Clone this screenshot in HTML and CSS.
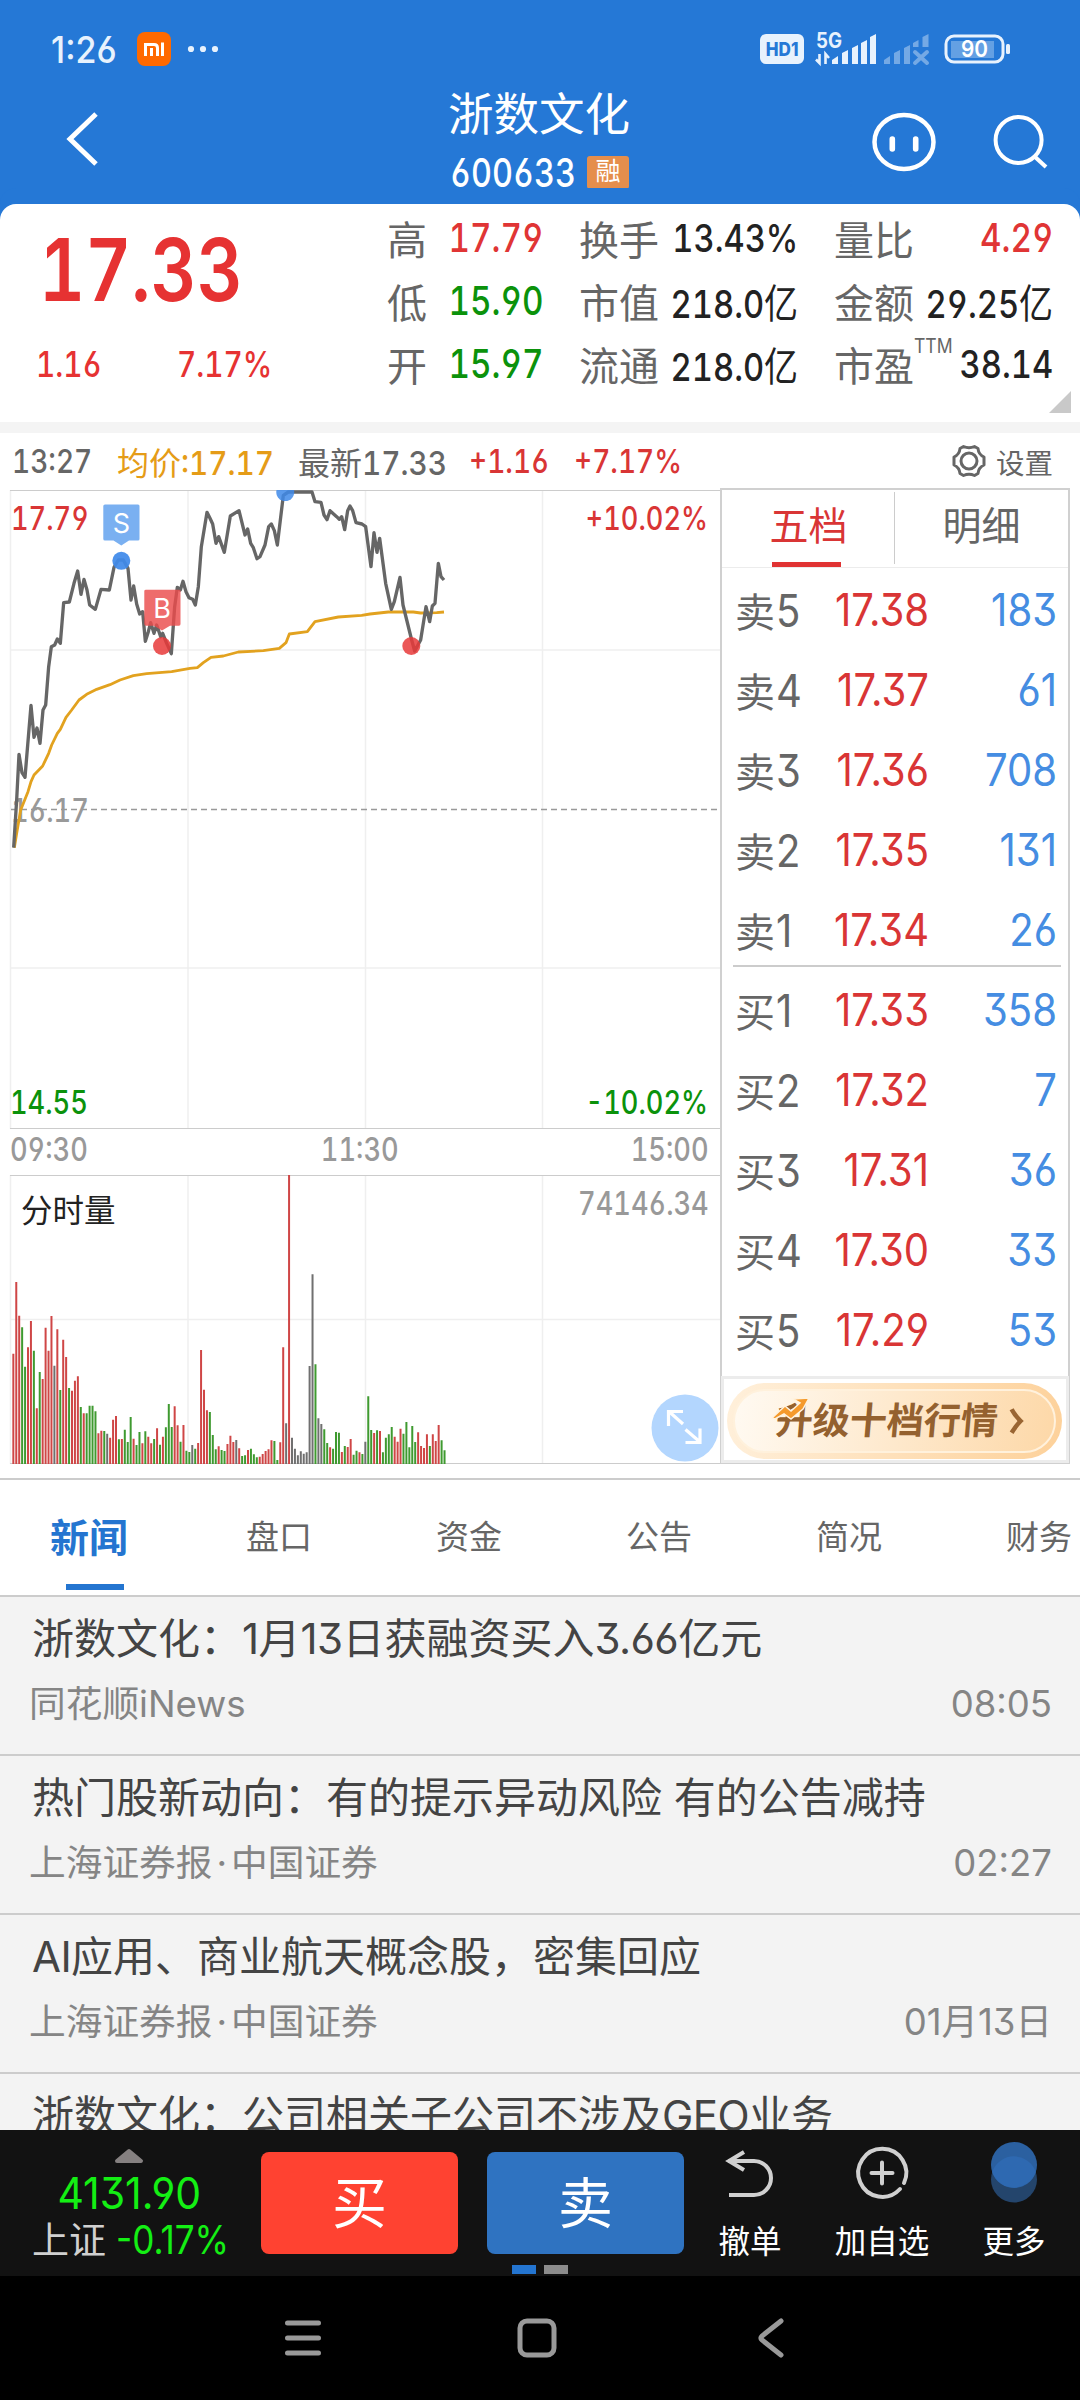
FILE: index.html
```html
<!DOCTYPE html>
<html lang="zh-CN">
<head>
<meta charset="utf-8">
<title>浙数文化 600633</title>
<link rel="stylesheet" href="styles.css">
</head>
<body>
<div class="screen">
  <header class="header">
    <div class="status">
      <span class="clock">1:26</span>
      <svg class="mi" width="34" height="34" viewBox="0 0 34 34"><rect width="34" height="34" rx="8" fill="#ff6900"/><path d="M8.500 24V12.500H17Q20.500 12.500 20.500 16V24M14.500 16V24M25.500 10.500V24" fill="none" stroke="#fff" stroke-width="3"/></svg>
      <svg class="dots" width="32" height="8" viewBox="0 0 32 8"><g fill="#e8f2fd"><circle cx="4" cy="4" r="3.100"/><circle cx="16" cy="4" r="3.100"/><circle cx="28" cy="4" r="3.100"/></g></svg>
      <span class="hd"><span>HD1</span></span>
      <svg class="signal" width="114" height="34" viewBox="0 0 114 34">
        <text class="net" x="1" y="16" textLength="26" lengthAdjust="spacingAndGlyphs">5G</text>
        <path d="M4.500 22V31L1 27.500M10.500 32V22L14 26" fill="none" stroke="#e8f2fd" stroke-width="2.600"/>
        <g fill="#e8f2fd"><path d="M17 32V28L23 24V32ZM27 32V21L33 18V32ZM37 32V16L43 13V32ZM46 32V11L52 8V32ZM55 32V5L61 2V32Z"/></g>
        <g fill="#74a9e5"><path d="M69 32V28L75 24V32ZM79 32V21L85 18V32ZM89 32V16L95 13V32ZM98 15V11L103.500 8V15ZM107.500 15V5L113.500 2V15Z"/></g>
        <path d="M100 20L112 31M112 20L100 31" stroke="#74a9e5" stroke-width="4" stroke-linecap="round"/>
      </svg>
      <svg class="battery" width="68" height="30" viewBox="0 0 68 30"><rect x="2" y="2" width="57" height="26" rx="8" fill="none" stroke="#e8f2fd" stroke-width="3"/><rect x="7" y="7" width="43" height="17" fill="#64a0e3"/><rect x="62" y="10" width="4" height="10" rx="1.500" fill="#e8f2fd"/><text class="charge" x="17" y="23.300" textLength="27" lengthAdjust="spacingAndGlyphs">90</text></svg>
    </div>
    <div class="titlebar">
      <svg class="back" width="36" height="60" viewBox="0 0 36 60"><path d="M31 5L5 30L31 55" fill="none" stroke="#fff" stroke-width="5"/></svg>
      <div class="title">
        <h1>浙数文化</h1>
        <div class="code"><span class="din">600633</span><b>融</b></div>
      </div>
      <svg class="tools" width="180" height="64" viewBox="0 0 180 64"><g fill="none" stroke="#fff"><ellipse cx="34" cy="32" rx="29.500" ry="27" stroke-width="4.500"/><path d="M22.300 29V39M45.700 29V39" stroke-width="5.600" stroke-linecap="round"/><circle cx="148.600" cy="30" r="23" stroke-width="4"/><path d="M164 46L176 57" stroke-width="4"/></g></svg>
    </div>
  </header>

  <section class="quote">
    <div class="last">
      <span class="din price">17.33</span>
      <div class="change"><span class="din">1.16</span><span class="din">7.17%</span></div>
    </div>
    <dl class="stats">
      <div><dt>高</dt><dd class="din up">17.79</dd></div>
      <div><dt>换手</dt><dd class="din">13.43%</dd></div>
      <div><dt>量比</dt><dd class="din up">4.29</dd></div>
      <div><dt>低</dt><dd class="din down">15.90</dd></div>
      <div><dt>市值</dt><dd class="din">218.0<i>亿</i></dd></div>
      <div><dt>金额</dt><dd class="din">29.25<i>亿</i></dd></div>
      <div><dt>开</dt><dd class="din down">15.97</dd></div>
      <div><dt>流通</dt><dd class="din">218.0<i>亿</i></dd></div>
      <div><dt>市盈<sup>TTM</sup></dt><dd class="din">38.14</dd></div>
    </dl>
    <svg class="corner" width="22" height="22" viewBox="0 0 22 22"><path d="M22 0V22H0Z" fill="#c9c9c9"/></svg>
  </section>

  <section class="info">
    <span class="din t-time">13:27</span>
    <span class="t-avg">均价<span class="din">:17.17</span></span>
    <span class="t-last">最新<span class="din">17.33</span></span>
    <span class="din t-chg">+1.16</span>
    <span class="din t-pct">+7.17%</span>
    <span class="setup"><svg width="36" height="36" viewBox="0 0 36 36"><g fill="none" stroke="#666" stroke-width="3"><path d="M12.500 3.500Q18 6 23.500 3.500L27 5.500Q27.500 11.500 33 14V22Q27.500 24.500 27 30.500L23.500 32.500Q18 30 12.500 32.500L9 30.500Q8.500 24.500 3 22V14Q8.500 11.500 9 5.500Z" stroke-linejoin="round"/><circle cx="18" cy="18" r="8"/></g></svg>设置</span>
  </section>

  <section class="board">
    <div class="charts">
      <div class="plot">
        <svg width="710" height="639" viewBox="0 0 710 639">
          <g stroke="#efefef" stroke-width="1.500"><path d="M.5 0V639M178 0V639M355.500 0V639M532.500 0V639M0 160H710M0 478H710"/></g>
          <path d="M0 .5H710M0 638.500H710" stroke="#ccc"/>
          <path d="M1 319.500H710" stroke="#999" stroke-width="1.700" stroke-dasharray="6 4"/>
        </svg>
        <span class="din lab hi">17.79</span><span class="din lab hi-pct">+10.02%</span>
        <span class="din lab mid">16.17</span>
        <span class="din lab lo">14.55</span><span class="din lab lo-pct">-10.02%</span>
        <svg class="lines" width="710" height="639" viewBox="0 0 710 639">
          <g transform="translate(-10 -10) scale(.33333)" fill="none" stroke-linejoin="round">
            <path stroke="#e2a21f" stroke-width="8.500" d="M43 1103L50 1060L62 990L84 935L93 905L102 885L128 858L146 820L155 795L172 760L181 748L198 712L215 690L237 660L260 643L290 628L330 614L360 600L400 587L440 581L515 575L570 565L592 563L610 548L633 532L670 528L715 516L790 512L838 505L858 488L868 462L922 455L945 425L1015 411L1085 406L1110 402L1165 396L1240 396L1262 399L1310 398L1332 396"/>
            <path stroke="#666" stroke-width="10" d="M41 1103L50 960L57 823L66 878L75 892L93 676L102 772L111 744L120 790L129 690L137 675L146 560L154 500L164 495L172 477L181 490L191 368L208 366L222 310L233 273L243 343L252 298L261 330L269 375L286 388L303 328L328 330L342 262L355 240L370 240L384 265L393 360L401 318L410 372L419 402L428 395L436 484L445 455L452 428L462 460L470 435L482 470L488 460L500 490L514 521L524 380L532 322L541 330L549 304L558 335L567 353L578 358L586 375L595 320L604 200L621 97L630 115L638 132L648 190L656 170L673 217L691 108L717 92L735 165L743 147L752 190L760 203L771 236L780 230L795 195L806 140L814 132L823 152L832 195L850 46L865 36L936 36L945 65L963 67L972 105L981 119L990 92L1010 110L1018 118L1025 110L1034 149L1043 92L1050 78L1058 92L1068 128L1086 132L1097 140L1113 260L1122 158L1131 217L1139 175L1157 310L1174 388L1183 365L1200 292L1209 375L1235 480L1244 513L1262 480L1278 380L1289 425L1297 378L1305 370L1315 250L1323 290L1332 300"/>
          </g>
          <circle cx="111.300" cy="70.800" r="9" fill="#3f8ae9" opacity=".93"/>
          <path d="M266.500 0A9 9 0 1 0 284 0Z" fill="#3f8ae9" opacity=".85"/>
          <g fill="#e83a3a" opacity=".85"><circle cx="152" cy="156" r="9"/><circle cx="401.300" cy="156" r="9"/></g>
          <path d="M95 14.500H128Q129.500 14.500 129.500 16V49Q129.500 50.500 128 50.500H119L111.300 55.500L103.500 50.500H95Q93.300 50.500 93.300 49V16Q93.300 14.500 95 14.500Z" fill="#6fa9f0" opacity=".92"/>
          <path d="M136 99.800H169Q170.500 99.800 170.500 101V134Q170.500 135.800 169 135.800H160L152 140.500L144 135.800H136Q134.300 135.800 134.300 134V101Q134.300 99.800 136 99.800Z" fill="#ea4c4c" opacity=".82"/>
          <text class="mark" x="111.300" y="42.500">S</text><text class="mark" x="152" y="127.500">B</text>
        </svg>
      </div>
      <div class="axis"><span class="din">09:30</span><span class="din">11:30</span><span class="din">15:00</span></div>
      <div class="volume">
        <svg id="volume" width="710" height="289" viewBox="0 0 710 289">
          <path d="M.5 0V289M178 0V289M355.500 0V289M532.500 0V289M0 144.500H710" stroke="#efefef" stroke-width="1.500"/>
          <path d="M0 .5H710M0 288.500H710" stroke="#ccc"/>
        </svg>
        <span class="lab vname">分时量</span><span class="din lab vmax">74146.34</span>
        <svg class="expand" width="68" height="68" viewBox="0 0 68 68"><circle cx="34" cy="34" r="33.500" fill="#b3d6fe"/><path d="M32 30L18 17.500M17.500 32V17.500H32M34.500 35.500L49 48M34.500 48.500H49V34.500" fill="none" stroke="#fff" stroke-width="3.200"/></svg>
      </div>
    </div>

    <div class="book">
      <div class="booktabs"><span class="on">五档</span><span>明细</span></div>
      <div class="levels">
        <div><span>卖<em>5</em></span><b>17.38</b><i>183</i></div>
        <div><span>卖<em>4</em></span><b>17.37</b><i>61</i></div>
        <div><span>卖<em>3</em></span><b>17.36</b><i>708</i></div>
        <div><span>卖<em>2</em></span><b>17.35</b><i>131</i></div>
        <div class="split"><span>卖<em>1</em></span><b>17.34</b><i>26</i></div>
        <div><span>买<em>1</em></span><b>17.33</b><i>358</i></div>
        <div><span>买<em>2</em></span><b>17.32</b><i>7</i></div>
        <div><span>买<em>3</em></span><b>17.31</b><i>36</i></div>
        <div><span>买<em>4</em></span><b>17.30</b><i>33</i></div>
        <div><span>买<em>5</em></span><b>17.29</b><i>53</i></div>
      </div>
      <div class="upgrade"><div class="pill"><div class="ring">
        <span>升级十档行情</span>
        <svg class="chev" width="18" height="30" viewBox="0 0 18 30"><path d="M3 2Q6 8 13 15Q8 20 3 28" fill="none" stroke="#9a6532" stroke-width="5"/></svg>
        <svg class="spark" width="40" height="26" viewBox="0 0 40 26"><path d="M1 21L14 9L20 14L29 6L22 2L38 1L32 12L20 22L13 17L4 22Z" fill="#f59a2c" stroke="#fff3e0" stroke-width="1.500"/></svg>
      </div></div></div>
    </div>
  </section>

  <nav class="tabs"><span class="on">新闻</span><span>盘口</span><span>资金</span><span>公告</span><span>简况</span><span>财务</span></nav>

  <section class="news">
    <article><h2>浙数文化：<em>1</em>月<em>13</em>日获融资买入<em>3.66</em>亿元</h2><p><span>同花顺<em>iNews</em></span><time>08:05</time></p></article>
    <article><h2>热门股新动向：有的提示异动风险 有的公告减持</h2><p><span>上海证券报<u>·</u>中国证券</span><time>02:27</time></p></article>
    <article><h2><em>AI</em>应用、商业航天概念股，密集回应</h2><p><span>上海证券报<u>·</u>中国证券</span><time>01月13日</time></p></article>
    <article><h2>浙数文化：公司相关子公司不涉及<em>GEO</em>业务</h2></article>
  </section>

  <footer class="trade">
    <div class="index">
      <svg width="30" height="16" viewBox="0 0 30 16"><path d="M3 13L15 3L27 13Z" fill="#858080" stroke="#858080" stroke-width="4" stroke-linejoin="round"/></svg>
      <span class="idx">4131.90</span>
      <span class="idx-chg">上证<em>-0.17%</em></span>
    </div>
    <div class="btn buy">买</div>
    <div class="btn sell">卖</div>
    <div class="act a1"><svg width="50" height="50" viewBox="0 0 50 50"><path d="M3 12H29A17 17 0 0 1 29 46H4M19 3L4 12L19 21" fill="none" stroke="#d0d0d0" stroke-width="4"/></svg>撤单</div>
    <div class="act a2"><svg width="54" height="54" viewBox="0 0 54 54"><path d="M49 37A24 24 0 1 0 45 43M27 16.500V37.500M16.500 27H37.500" fill="none" stroke="#d0d0d0" stroke-width="4" stroke-linecap="round"/></svg>加自选</div>
    <div class="act a3"><svg width="48" height="64" viewBox="0 0 48 64"><circle cx="24" cy="38.500" r="23" fill="#24456c"/><circle cx="24" cy="24" r="23" fill="#2b60a0"/><path d="M2.200 31A23 23 0 0 1 45.800 31A23 23 0 0 1 2.200 31Z" fill="#2e69b1"/></svg>更多</div>
    <div class="pager"><i></i><i></i></div>
  </footer>

  <div class="sysnav">
    <svg width="38" height="40" viewBox="0 0 38 40"><path d="M3.500 5H34.500M3.500 20H34.500M3.500 35H34.500" stroke="#999" stroke-width="5" stroke-linecap="round"/></svg>
    <svg class="home" width="40" height="40" viewBox="0 0 40 40"><rect x="3" y="3" width="34" height="34" rx="7" fill="none" stroke="#999" stroke-width="5"/></svg>
    <svg width="28" height="40" viewBox="0 0 28 40"><path d="M24 3L5 18Q3 20 5 22L24 37" fill="none" stroke="#999" stroke-width="5" stroke-linecap="round"/></svg>
  </div>
</div>
<script src="volume.js"></script>
</body>
</html>
```
FILE: styles.css
```css
* { box-sizing: border-box; }
body { margin: 0; font-family: Inter, "Noto Sans CJK SC", sans-serif; color: #666; }
h1, h2, p, dl, dd { margin: 0; font-weight: 400; }
em, i, u { font-style: normal; text-decoration: none; }
svg { display: block; flex: none; overflow: visible; }
.screen { width: 1080px; height: 2400px; overflow: hidden; background: #fff; display: flex; flex-direction: column; }
.screen > * { flex: none; }
.din { display: inline-block; white-space: nowrap; font-weight: 500; font-variant-numeric: tabular-nums; font-feature-settings: "tnum", "cv03", "cv04"; transform: scaleX(.85); transform-origin: left center; }

.header { height: 204px; background: #2578d6; color: #fff; }
.status { height: 98px; display: flex; align-items: center; padding-left: 51px; color: #e8f2fd; }
.clock { width: 86px; font-size: 37px; font-weight: 500; font-feature-settings: "cv03"; transform: scaleX(.92); transform-origin: left; }
.dots { margin-left: 16px; }
.hd { margin-left: 541px; width: 44px; height: 30px; border-radius: 6px; background: #e8f2fd; color: #2578d6; display: flex; align-items: center; justify-content: center; font-size: 19px; font-weight: 800; }
.hd span { transform: scaleX(.9); }
.signal { margin-left: 11px; }
.net { font-size: 21px; font-weight: 700; fill: #e8f2fd; }
.battery { margin-left: 15px; }
.charge { font-size: 23px; font-weight: 600; fill: #fff; }
.titlebar { height: 106px; display: flex; align-items: center; }
.back { margin: -24px 0 0 65px; }
.title { flex: 1; margin-left: 347px; height: 106px; }
.title h1 { height: 38px; font-size: 45.500px; line-height: 34px; font-weight: 400; white-space: nowrap; }
.code { display: flex; align-items: center; height: 73px; }
.code .din { width: 137px; font-size: 40px; margin-left: 2px; transform: scaleX(.81); }
.code b { width: 42px; height: 33px; border-radius: 3px; background: #e58e4c; font-size: 25px; line-height: 31px; font-weight: 400; text-align: center; }
.tools { margin: -19px 30px 0 0; }

.quote { height: 218px; display: flex; position: relative; background: #fff; border-radius: 16px 16px 0 0; box-shadow: 0 -16px 0 #2578d6; }
.last { width: 387px; padding: 22px 0 0 36px; color: #e63232; }
.price { font-size: 86px; font-weight: 600; line-height: 88px; display: block; margin-left: 3px; transform: scaleX(.83); }
.change { display: flex; margin-top: 24px; font-size: 35px; line-height: 52px; }
.change .din:first-child { width: 141px; }
.stats { display: grid; grid-template-columns: 192px 255px 219px; grid-auto-rows: 63px; margin-top: 2px; font-size: 40px; }
.stats > div { display: flex; justify-content: space-between; align-items: center; white-space: nowrap; padding-right: 36px; }
.stats > div:nth-child(3n) { padding-right: 0; }
.stats dt { display: flex; }
.stats sup { font-size: 20px; line-height: 22px; height: 40px; transform: scaleX(.88); transform-origin: left; }
.stats dd { color: #222; font-size: 38.500px; margin-left: -40px; transform-origin: right center; }
.stats dd.up, .stats dd.down { font-size: 40px; transform: scaleX(.83); }
.stats dd i { font-size: 40px; font-weight: 400; }
.stats .up { color: #e03535; }
.stats .down { color: #0b920b; }
.corner { position: absolute; right: 9px; bottom: 9px; }

.info { border-top: 11px solid #f4f4f4; height: 67px; display: flex; align-items: center; font-size: 33px; padding-left: 12px; white-space: nowrap; }
.info > span { flex: none; }
.info .t-time { width: 105px; }
.info .din { font-weight: 450; }
.t-avg { width: 181px; color: #e59c17; font-size: 32px; }
.t-last { width: 171px; font-size: 32px; }
.t-avg .din, .t-last .din { font-size: 33px; transform: scaleX(.9); }
.info .t-chg { width: 105px; color: #d93535; font-weight: 500; }
.info .t-pct { color: #d93535; width: 377px; font-weight: 500; }
.setup { display: flex; align-items: center; gap: 9px; font-size: 28.500px; }

.board { height: 989px; display: flex; padding-left: 10px; padding-top: 1px; }
.charts { width: 710px; position: relative; }
.plot, .volume { position: relative; }
.plot { height: 639px; }
.lab { position: absolute; font-size: 32px; line-height: 32px; }
.lines { position: absolute; left: 0; top: 0; }
.hi { left: 1px; top: 13px; color: #d93535; }
.hi-pct { right: 12px; top: 13px; color: #d93535; transform-origin: right; }
.mid { left: 1px; top: 305px; color: #999; }
.lo { left: 0; top: 597px; color: #0b920b; }
.lo-pct { right: 12px; top: 597px; color: #0b920b; transform-origin: right; }
.mark { font-size: 27px; fill: #fff; text-anchor: middle; }
.axis { height: 46px; display: flex; justify-content: space-between; align-items: center; padding: 0 11px 5px 0; color: #999; font-size: 32px; line-height: 32px; }
.axis .din:nth-child(2) { transform-origin: center; }
.axis .din:last-child { transform-origin: right; }
.vname { left: 11px; top: 20px; color: #222; font-size: 31.500px; }
.vmax { right: 11px; top: 13px; color: #999; transform-origin: right; }
.expand { position: absolute; left: 641px; top: 219px; }

.book { width: 350px; height: 976px; margin-top: -2px; border: 2px solid #d0d0d0; display: flex; flex-direction: column; }
.booktabs { height: 78px; display: grid; grid-template-columns: 173px 173px; border-bottom: 1.500px solid #ececec; font-size: 39px; line-height: 71px; text-align: center; }
.booktabs span { position: relative; }
.booktabs .on { color: #d93535; }
.booktabs .on::before { content: ""; position: absolute; left: 50px; bottom: 0; width: 69px; height: 5px; background: #e03333; }
.booktabs .on::after { content: ""; position: absolute; right: 0; top: 2px; width: 1px; height: 72px; background: #ccc; }
.levels { padding: 2px 7px 0 11px; }
.levels > div { height: 80px; display: grid; grid-template-columns: 80px 114px 1fr; align-items: center; font-size: 40px; padding: 0 4px 0 2px; }
.levels .split { height: 77px; padding-top: 5px; margin-bottom: 3px; border-bottom: 2px solid #ccc; }
.levels span { white-space: nowrap; }
.levels em, .levels b, .levels i { display: inline-block; font-size: 44.500px; font-weight: 400; line-height: 50px; font-feature-settings: "cv03", "cv04", "cv09"; transform: scaleX(.9); transform-origin: right; text-align: right; }
.levels em { transform-origin: left; margin-left: 1px; }
.levels b { color: #d93535; }
.levels i { color: #458de2; }
.upgrade { margin: auto -1px -1px; height: 87px; border: 3px solid #ececec; padding: 4px 3px; }
.pill { height: 76px; width: 335px; border-radius: 38px; padding: 6px; background: linear-gradient(100deg, #fff0db, #fdd19a); }
.ring { height: 64px; border-radius: 32px; border: 2px solid #fff1dc; background: linear-gradient(100deg, #fffaf2, #fdd8a8); position: relative; display: flex; align-items: center; padding-left: 41px; }
.ring span { font-size: 37px; line-height: 50px; font-weight: 600; color: #94612f; transform: skewX(-5deg); white-space: nowrap; }
.chev { margin-left: 10px; transform: scale(.9); }
.spark { position: absolute; left: 36px; top: 6px; }

.tabs { height: 119px; border-top: 2px solid #ccc; border-bottom: 2px solid #ccc; display: flex; font-size: 33px; line-height: 115px; color: #666; padding-left: 0; }
.tabs span { width: 190px; flex: none; text-align: center; position: relative; left: -6px; }
.tabs .on { font-size: 39px; font-weight: 700; color: #2475d0; }
.tabs .on::after { content: ""; position: absolute; left: 72px; bottom: 5px; width: 58px; height: 6px; background: #2475d0; }

.news { height: 533px; background: #f3f3f3; overflow: hidden; }
.news article { height: 159px; border-bottom: 2px solid #ccc; padding: 15px 28px 0 32px; white-space: nowrap; color: #444; }
.news h2 { font-size: 42px; line-height: 54px; }
.news p { display: flex; justify-content: space-between; margin: 13px 0 0 -3px; font-size: 36.700px; line-height: 50px; color: #858585; }
.news em, .news time { font-feature-settings: "cv03", "cv09"; }
.news h2 em { letter-spacing: -.6px; }
.news u { margin: 0 4px; }
.news time { font-size: 36.500px; }

.trade { height: 146px; background: #121212; position: relative; display: flex; color: #fff; }
.index { width: 258px; margin-right: 3px; display: flex; flex-direction: column; align-items: center; padding-top: 18px; white-space: nowrap; }
.idx { color: #14ef14; font-size: 44px; line-height: 50px; margin-top: 4px; font-feature-settings: "cv03", "cv04", "cv09"; transform: scaleX(.93); }
.idx-chg { font-size: 37px; line-height: 44px; width: 194px; color: #d0d0d0; }
.idx-chg em { display: inline-block; margin-left: 10px; color: #14ef14; font-size: 39px; transform: scaleX(.9); transform-origin: left; }
.btn { width: 197px; height: 102px; margin: 22px 29px 0 0; border-radius: 8px; font-size: 55px; line-height: 102px; text-align: center; }
.buy { background: #ff4231; }
.sell { background: #2f73c1; margin-right: 0; }
.act { width: 132px; display: flex; flex-direction: column; align-items: center; justify-content: space-between; padding-bottom: 14px; font-size: 31.500px; line-height: 40px; white-space: nowrap; }
.a1 { padding-top: 19px; }
.a2 { padding-top: 16px; }
.a3 { padding-top: 11px; }
.pager { position: absolute; left: 512px; bottom: 2px; display: flex; gap: 8px; }
.pager i { width: 24px; height: 9px; background: #2475d0; }
.pager i + i { background: #8c8c8c; }

.sysnav { height: 124px; background: #000; display: flex; align-items: center; padding: 0 295px 0 284px; justify-content: space-between; }
.home { margin-left: -5px; }
```
FILE: volume.js
```js
// One bar per minute: colour key, then the bar's top in thirds of a pixel (baseline 1031).
const bars = `r701 r486 r587 g622 g740 r682 r603 g692 r865 g756 r777 r623 r692 r588 k737 r628 g810 r659 r711 g804
r812 r782 r769 g861 r880 g880 g857 g857 g874 r940 r932 g933 k941 r953 r899 r888 g958 r957 g929 g966
g891 r956 g975 g936 r970 g934 r950 r970 g957 r925 g974 r950 g922 g852 g921 r859 r916 g965 r915 g992
g996 k975 g986 r969 r690 r809 r871 g876 g945 g988 r979 g990 g993 r972 r947 r966 k960 r985 g1008 g1006
r990 g986 g1003 g1012 r1010 r1002 r993 r988 r961 g963 g1020 r967 r682 k910 r165 k953 k986 k1006 k994 k1001
k997 k738 k463 g733 k895 k912 g928 g969 r982 g986 g936 g938 r996 g978 r981 r957 g1004 g992 r997 g1002
k965 g829 g930 r939 g931 r933 g997 g953 g943 g921 r950 r965 r926 g941 g906 g982 g918 g966 r937 r978
r984 r943 g978 r943 r963 r915 g961 g991`.split(/\s+/);
const colours = { r: "#cf4646", g: "#3f9a30", k: "#707070" };
const svg = document.getElementById("volume");
for (const key in colours) {
  const path = document.createElementNS("http://www.w3.org/2000/svg", "path");
  path.setAttribute("d", bars.map((b, i) => b[0] === key
    ? `M${(40 + 8.8 * i) / 3 - 10} 289V${b.slice(1) / 3 - 55}` : "").join(""));
  path.setAttribute("stroke", colours[key]);
  path.setAttribute("stroke-width", "2");
  svg.append(path);
}
```
